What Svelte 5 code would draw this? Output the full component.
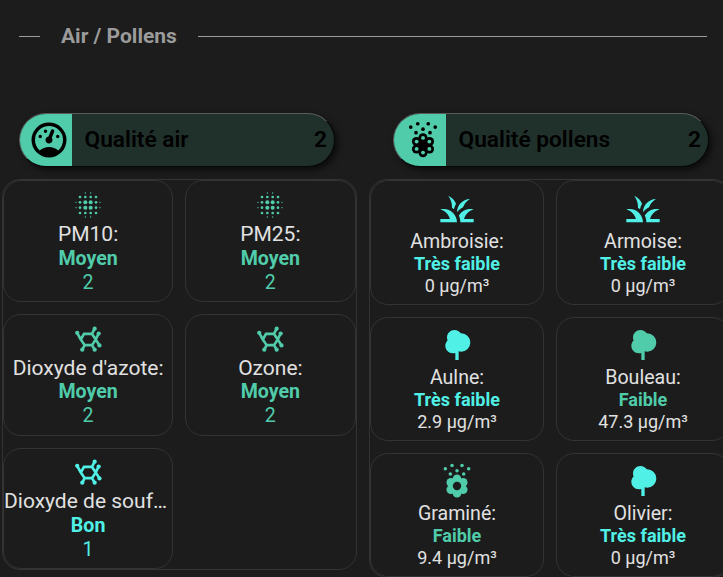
<script lang="ts">
	type IconName = 'blur' | 'molecule' | 'grass' | 'tree' | 'pollen' | 'pollenOutline' | 'gauge';

	interface Sensor {
		name: string;
		icon: IconName;
		state: string;
		level: 'good' | 'fair';
		value: string;
	}

	const air: Sensor[] = [
		{ name: 'PM10:', icon: 'blur', state: 'Moyen', level: 'fair', value: '2' },
		{ name: 'PM25:', icon: 'blur', state: 'Moyen', level: 'fair', value: '2' },
		{ name: "Dioxyde d'azote:", icon: 'molecule', state: 'Moyen', level: 'fair', value: '2' },
		{ name: 'Ozone:', icon: 'molecule', state: 'Moyen', level: 'fair', value: '2' },
		{ name: 'Dioxyde de soufre:', icon: 'molecule', state: 'Bon', level: 'good', value: '1' }
	];

	const pollens: Sensor[] = [
		{ name: 'Ambroisie:', icon: 'grass', state: 'Très faible', level: 'good', value: '0 µg/m³' },
		{ name: 'Armoise:', icon: 'grass', state: 'Très faible', level: 'good', value: '0 µg/m³' },
		{ name: 'Aulne:', icon: 'tree', state: 'Très faible', level: 'good', value: '2.9 µg/m³' },
		{ name: 'Bouleau:', icon: 'tree', state: 'Faible', level: 'fair', value: '47.3 µg/m³' },
		{ name: 'Graminé:', icon: 'pollen', state: 'Faible', level: 'fair', value: '9.4 µg/m³' },
		{ name: 'Olivier:', icon: 'tree', state: 'Très faible', level: 'good', value: '0 µg/m³' }
	];

	const blurDots = [
		[10, 3, 0.5], [14, 3, 0.5],
		[6, 6, 1], [10, 6, 1], [14, 6, 1], [18, 6, 1],
		[3, 10, 0.5], [6, 10, 1], [10, 10, 1.5], [14, 10, 1.5], [18, 10, 1], [21, 10, 0.5],
		[3, 14, 0.5], [6, 14, 1], [10, 14, 1.5], [14, 14, 1.5], [18, 14, 1], [21, 14, 0.5],
		[6, 18, 1], [10, 18, 1], [14, 18, 1], [18, 18, 1],
		[10, 21, 0.5], [14, 21, 0.5]
	];

	const pollenDots = [
		[5, 4.6], [9, 2.7], [15, 2.7], [19, 4.6], [12, 5.8], [8, 7.8], [16, 7.8]
	];

	const atoms = [
		[3.9, 7.4], [17, 4.3], [20, 7.9], [20.6, 16.8], [17, 20], [7.7, 20]
	];

	const petals = [0, 60, 120, 180, 240, 300].map((deg) => {
		const a = (deg * Math.PI) / 180;
		return [Math.sin(a), Math.cos(a)];
	});
</script>

{#snippet icon(name: IconName)}
	<svg viewBox="0 0 24 24" fill="currentColor" aria-hidden="true">
		{#if name === 'blur'}
			{#each blurDots as [cx, cy, r]}
				<circle {cx} {cy} {r} />
			{/each}
		{:else if name === 'molecule'}
			<path
				d="M9 8.2H15L17.8 12.4L15 16.6H9.5L6.6 12.4ZM3.9 7.4L6.6 12.4M15 8.2L17 4.3M20 7.9L17.8 12.4L20.6 16.8M15 16.6L17 20M9.5 16.6L7.7 20"
				fill="none"
				stroke="currentColor"
				stroke-width="2"
			/>
			{#each atoms as [cx, cy]}
				<circle {cx} {cy} r="1.6" />
			{/each}
		{:else if name === 'grass'}
			<path
				d="M12,20H2V18H7.75C7.02,15.19 4.81,12.99 2,12.26C2.64,12.1 3.31,12 4,12C8.42,12 12,15.58 12,20M22,12.26C21.36,12.1 20.69,12 20,12C17.07,12 14.52,13.58 13.12,15.93C13.41,16.59 13.65,17.28 13.79,18C13.92,18.65 14,19.32 14,20H22V18H16.24C16.98,15.19 19.19,12.99 22,12.26M15.64,11.02C16.42,8.93 17.87,7.18 19.73,6.02C15.44,6.16 12,9.67 12,14V14.02C12.95,12.75 14.2,11.72 15.64,11.02M11.42,8.85C10.58,6.66 8.88,4.89 6.7,4C8.14,5.86 9,8.18 9,10.71C9,10.92 8.97,11.12 8.96,11.32C9.39,11.56 9.79,11.84 10.18,12.14C10.39,10.96 10.83,9.85 11.42,8.85Z"
			/>
		{:else if name === 'tree'}
			<path
				d="M11,21V16.74C10.53,16.91 10.03,17 9.5,17C7,17 5,15 5,12.5C5,11.23 5.5,10.09 6.36,9.27C6.13,8.73 6,8.13 6,7.5C6,5 8,3 10.5,3C12.06,3 13.45,3.8 14.25,5C14.33,5 14.41,5 14.5,5A5.5,5.5 0 0,1 20,10.5A5.5,5.5 0 0,1 14.5,16C14,16 13.5,15.93 13,15.79V21H11Z"
			/>
		{:else if name === 'gauge'}
			<path
				d="M12,2A10,10 0 0,0 2,12A10,10 0 0,0 12,22A10,10 0 0,0 22,12A10,10 0 0,0 12,2M12,4A8,8 0 0,1 20,12C20,14.4 19,16.5 17.3,18C15.9,16.7 14,16 12,16C10,16 8.2,16.7 6.7,18C5,16.5 4,14.4 4,12A8,8 0 0,1 12,4M14,5.89C13.62,5.9 13.26,6.15 13.1,6.54L11.81,9.77L11.71,10C11,10.13 10.41,10.6 10.14,11.26C9.73,12.29 10.23,13.45 11.26,13.86C12.29,14.27 13.45,13.77 13.86,12.74C14.12,12.08 14,11.32 13.57,10.76L13.67,10.5L14.96,7.29L14.97,7.26C15.17,6.75 14.92,6.17 14.41,5.96C14.28,5.91 14.15,5.89 14,5.89M10,6A1,1 0 0,0 9,7A1,1 0 0,0 10,8A1,1 0 0,0 11,7A1,1 0 0,0 10,6M7,9A1,1 0 0,0 6,10A1,1 0 0,0 7,11A1,1 0 0,0 8,10A1,1 0 0,0 7,9M17,9A1,1 0 0,0 16,10A1,1 0 0,0 17,11A1,1 0 0,0 18,10A1,1 0 0,0 17,9Z"
			/>
		{:else}
			{#each pollenDots as [cx, cy]}
				<circle {cx} {cy} r="1.05" />
			{/each}
			<circle cx="12" cy="15" r="4.6" />
			{#each petals as [x, y]}
				<circle cx={12 + x * 4.3} cy={15 + y * 4.3} r="2.6" />
			{/each}
			{#if name === 'pollen'}
				<circle class="flower-hole" cx="12" cy="15" r="2.5" />
			{:else}
				{#each petals as [x, y]}
					<circle class="petal-hole" cx={12 + x * 4.2} cy={15 + y * 4.2} r="1.1" />
				{/each}
			{/if}
		{/if}
	</svg>
{/snippet}

{#snippet section(title: string, head: IconName, total: number, items: Sensor[], kind: string)}
	<section class={kind}>
		<div class="pill">
			<div class="pill-icon">{@render icon(head)}</div>
			<span class="pill-name">{title}</span>
			<span class="pill-value">{total}</span>
		</div>
		<div class="grid">
			{#each items as item}
				<div class="card {item.level}">
					<div class="icon-box">{@render icon(item.icon)}</div>
					<div class="name">{item.name}</div>
					<div class="state">{item.state}</div>
					<div class="value">{item.value}</div>
				</div>
			{/each}
		</div>
	</section>
{/snippet}

<main>
	<header>
		<span class="line short"></span>
		<h2>Air / Pollens</h2>
		<span class="line"></span>
	</header>
	<div class="columns">
		{@render section('Qualité air', 'gauge', 2, air, 'air')}
		{@render section('Qualité pollens', 'pollenOutline', 2, pollens, 'pollens')}
	</div>
</main>

<style>
	:global(body) {
		margin: 0;
		background: #1c1c1c;
		overflow: hidden;
	}

	main {
		--good: #50f0e6;
		--fair: #50ccaa;
		--line: #333;
		height: 577px;
		overflow: hidden;
		font-family: Roboto, sans-serif;
		color: #e1e1e1;
	}

	header {
		display: flex;
		align-items: center;
		gap: 21px;
		height: 73px;
		padding: 0 16px 0 19px;
	}

	h2 {
		margin: 0;
		padding-bottom: 2px;
		font-size: 21px;
		font-weight: 700;
		line-height: 24px;
		color: #9b9b9b;
	}

	.line {
		flex: 1;
		height: 1px;
		background: #9b9b9b;
	}

	.line.short {
		flex: 0 0 21px;
	}

	.columns {
		display: grid;
		grid-template-columns: 354.5px 362px;
		gap: 12.5px;
		width: 729px;
		padding: 40px 0 0 2px;
	}

	.pill {
		display: flex;
		align-items: center;
		box-sizing: border-box;
		width: 316px;
		height: 54.4px;
		margin: 0 0 12px 17px;
		padding-right: 7px;
		overflow: hidden;
		border: 1px solid;
		border-color: #5b5b5b #060606 #060606 #5b5b5b;
		border-radius: 27px;
		background: #20302b;
		box-shadow: 3px 3px 6px rgba(0, 0, 0, 0.6);
		color: #000;
		font-size: 22.7px;
		font-weight: 600;
	}

	.pollens .pill {
		margin-left: 24px;
	}

	.pill-icon {
		display: flex;
		align-items: center;
		justify-content: center;
		align-self: stretch;
		width: 52px;
		background: var(--fair);
	}

	.pill-icon svg {
		width: 42px;
		height: 42px;
		margin-left: 6px;
	}

	.pill-name {
		flex: 1;
		margin-left: 12.5px;
	}

	.pill-name,
	.pill-value {
		padding-bottom: 2px;
	}

	.grid {
		display: grid;
		grid-template-columns: 1fr 1fr;
		gap: 12px;
		border: 1px solid var(--line);
		border-radius: 18px;
	}

	.card {
		box-sizing: border-box;
		min-width: 0;
		height: 121.7px;
		padding-top: 7.5px;
		border: 1px solid var(--line);
		border-radius: 18px;
		text-align: center;
		font-size: 19.6px;
		line-height: 24px;
	}

	.pollens .card {
		height: 124.2px;
		padding-top: 7.2px;
		font-size: 18px;
		line-height: 22px;
	}

	.icon-box {
		display: flex;
		justify-content: center;
		height: 33.1px;
	}

	.icon-box svg {
		width: 32px;
		height: 32px;
	}

	.pollens .icon-box {
		height: 41px;
	}

	.pollens .icon-box svg {
		width: 40px;
		height: 40px;
	}

	.name {
		height: 24.8px;
		overflow: hidden;
		white-space: nowrap;
		text-overflow: ellipsis;
		font-size: 21px;
	}

	.pollens .name {
		height: 23px;
		line-height: 24px;
		font-size: 19.6px;
	}

	.state {
		font-weight: 700;
	}

	.good {
		--level: var(--good);
	}

	.fair {
		--level: var(--fair);
	}

	.icon-box,
	.state,
	.air .value {
		color: var(--level);
	}

	.flower-hole {
		fill: #1c1c1c;
	}

	.petal-hole {
		fill: var(--fair);
	}
</style>
